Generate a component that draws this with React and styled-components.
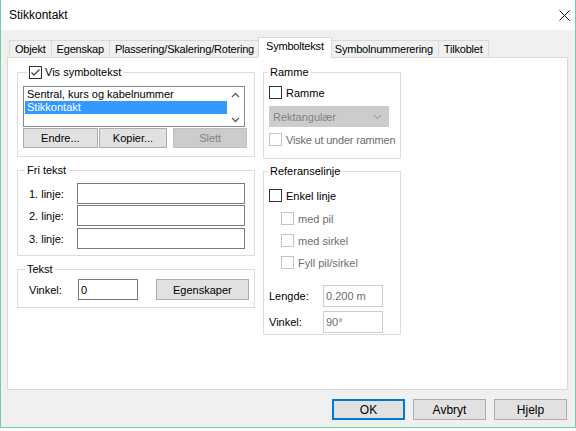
import React from "react";
import styled, { createGlobalStyle } from "styled-components";

const GlobalStyle = createGlobalStyle`
  html, body {
    margin: 0;
    padding: 0;
    background: #ffffff;
  }
  body {
    font-family: "Liberation Sans", Arial, sans-serif;
    font-size: 11px;
    color: #000;
  }
`;

const Window = styled.div`
  width: 576px;
  height: 428px;
  box-sizing: border-box;
  border-left: 1px solid #6fd1a3;
  border-right: 1px solid #6fd1a3;
  border-bottom: 1px solid #6fd1a3;
  background: #f0f0f0;
  box-shadow: 0 2px 3px rgba(0, 0, 0, 0.22);
  display: flex;
  flex-direction: column;
`;

const TitleBar = styled.div`
  height: 30px;
  background: #fff;
  display: flex;
  align-items: center;
  justify-content: space-between;
  padding: 0 9px 0 8px;
  font-size: 12px;
`;

const Body = styled.div`
  flex: 1;
  padding: 7px 7px 0 6px;
  display: flex;
  flex-direction: column;
`;

const TabRow = styled.div`
  display: flex;
  align-items: flex-end;
  height: 21px;
  position: relative;
  z-index: 1;
  margin-bottom: -1px;
  padding-left: 2px;
`;

const Tab = styled.div`
  box-sizing: border-box;
  height: ${p => (p.active ? "21px" : "18px")};
  padding: 0 ${p => (p.active ? "7px" : "5px")};
  margin: 0 ${p => (p.active ? "-2px" : "0")};
  border: 1px solid #d9d9d9;
  border-left-width: ${p => (p.first || p.active ? "1px" : "0")};
  border-bottom-color: ${p => (p.active ? "#fff" : "#d9d9d9")};
  background: ${p => (p.active ? "#fff" : "#f0f0f0")};
  display: flex;
  align-items: center;
  padding-bottom: ${p => (p.active ? "3px" : "1px")};
  position: relative;
  z-index: ${p => (p.active ? 2 : 1)};
  white-space: nowrap;
  letter-spacing: -0.2px;
`;

const Panel = styled.div`
  box-sizing: border-box;
  width: 561px;
  height: 333px;
  background: #fff;
  border: 1px solid #d9d9d9;
  padding: 8px 0 0 9px;
  display: flex;
  gap: 8px;
`;

const Column = styled.div`
  display: flex;
  flex-direction: column;
  width: ${p => p.w}px;
  gap: ${p => p.gap || 7}px;
`;

const Group = styled.fieldset`
  margin: 0;
  padding: 0;
  border: 1px solid #dcdcdc;
  min-width: 0;
  box-sizing: border-box;
`;

const Legend = styled.legend`
  padding: 0 2px;
  margin-left: ${p => p.ml || 7}px;
  line-height: 13px;
  display: flex;
  align-items: center;
  gap: 3px;
`;

const GroupBody = styled.div`
  padding: ${p => p.pad};
  display: flex;
  flex-direction: column;
`;

const ListBox = styled.div`
  box-sizing: border-box;
  width: 222px;
  height: 41px;
  border: 1px solid #828790;
  display: flex;
  padding: 1px 0 1px 1px;
`;

const ListItems = styled.div`
  flex: 1;
  display: flex;
  flex-direction: column;
`;

const ListItem = styled.div`
  height: 13px;
  line-height: 13px;
  padding-left: 2px;
  background: ${p => (p.selected ? "#3399ff" : "transparent")};
  color: ${p => (p.selected ? "#fff" : "#000")};
`;

const ScrollBar = styled.div`
  width: 17px;
  display: flex;
  flex-direction: column;
  justify-content: space-between;
  align-items: center;
  padding: 4px 0 2px;
`;

const ButtonRow = styled.div`
  display: flex;
  margin-top: ${p => p.mt || 0}px;
  align-items: center;
`;

const Button = styled.div`
  box-sizing: border-box;
  width: ${p => p.w}px;
  height: ${p => p.h || 20}px;
  margin-left: ${p => p.ml || 0}px;
  display: flex;
  align-items: center;
  justify-content: center;
  background: ${p => (p.disabled ? "#cccccc" : "#e1e1e1")};
  color: ${p => (p.disabled ? "#838383" : "#000")};
  border: ${p =>
    p.primary ? "2px solid #0078d7" : `1px solid ${p.disabled ? "#bfbfbf" : "#adadad"}`};
  font-size: ${p => p.fs || 11}px;
`;

const FieldRow = styled.div`
  display: flex;
  align-items: center;
  margin-top: ${p => p.mt || 0}px;
`;

const Label = styled.span`
  width: ${p => p.w}px;
  flex-shrink: 0;
  color: ${p => (p.disabled ? "#6d6d6d" : "#000")};
`;

const Input = styled.div`
  box-sizing: border-box;
  width: ${p => p.w}px;
  height: ${p => p.h || 21}px;
  border: 1px solid ${p => (p.disabled ? "#cccccc" : "#7a7a7a")};
  background: #fff;
  color: ${p => (p.disabled ? "#6d6d6d" : "#000")};
  display: flex;
  align-items: center;
  padding-left: 2px;
`;

const Select = styled.div`
  box-sizing: border-box;
  width: 120px;
  height: 21px;
  background: #cccccc;
  border: 1px solid #cccccc;
  color: #838383;
  display: flex;
  align-items: center;
  justify-content: space-between;
  padding: 0 6px 0 3px;
`;

const CheckRow = styled.div`
  display: flex;
  align-items: center;
  gap: 4px;
  margin-top: ${p => p.mt || 0}px;
  margin-left: ${p => p.ml || 0}px;
  color: ${p => (p.disabled ? "#6d6d6d" : "#000")};
  height: 13px;
  white-space: nowrap;
  letter-spacing: ${p => (p.tight ? "-0.2px" : "0")};
`;

const Box = styled.span`
  box-sizing: border-box;
  width: 13px;
  height: 13px;
  border: 1px solid ${p => (p.disabled ? "#c4c4c4" : "#333")};
  background: #fff;
  display: inline-flex;
  align-items: center;
  justify-content: center;
  flex-shrink: 0;
`;

const Footer = styled.div`
  display: flex;
  justify-content: flex-end;
  gap: 8px;
  padding: 9px 1px 0 0;
`;

const Check = ({ checked, disabled }) => (
  <Box disabled={disabled}>
    {checked && (
      <svg width="11" height="11" viewBox="0 0 11 11">
        <path d="M1.5 5.5 L4 8 L9.5 2.5" fill="none" stroke="#333" strokeWidth="1.1" />
      </svg>
    )}
  </Box>
);

const Chevron = ({ up, color = "#606060", w = 9 }) => (
  <svg width={w} height="6" viewBox="0 0 9 6">
    <path
      d={up ? "M1 5 L4.5 1.5 L8 5" : "M1 1 L4.5 4.5 L8 1"}
      fill="none"
      stroke={color}
      strokeWidth="1.3"
    />
  </svg>
);

const tabs = [
  "Objekt",
  "Egenskap",
  "Plassering/Skalering/Rotering",
  "Symboltekst",
  "Symbolnummerering",
  "Tilkoblet"
];

export default function App() {
  return (
    <>
      <GlobalStyle />
      <Window>
        <TitleBar>
          <span>Stikkontakt</span>
          <svg width="11" height="11" viewBox="0 0 11 11" style={{ marginRight: -4 }}>
            <path d="M0.5 0.5 L10.5 10.5 M10.5 0.5 L0.5 10.5" stroke="#111" strokeWidth="1" />
          </svg>
        </TitleBar>
        <Body>
          <TabRow>
            {tabs.map((t, i) => (
              <Tab key={t} first={i === 0} active={t === "Symboltekst"}>
                {t}
              </Tab>
            ))}
          </TabRow>
          <Panel>
            <Column w={238} gap={7}>
              <Group>
                <Legend ml={9}>
                  <Check checked />
                  <span>Vis symboltekst</span>
                </Legend>
                <GroupBody pad="7px 7px 8px 5px">
                  <ListBox>
                    <ListItems>
                      <ListItem>Sentral, kurs og kabelnummer</ListItem>
                      <ListItem selected>Stikkontakt</ListItem>
                    </ListItems>
                    <ScrollBar>
                      <Chevron up />
                      <Chevron />
                    </ScrollBar>
                  </ListBox>
                  <ButtonRow mt={1}>
                    <Button w={75}>Endre...</Button>
                    <Button w={69} ml={1}>Kopier...</Button>
                    <Button w={74} ml={6} disabled>
                      Slett
                    </Button>
                  </ButtonRow>
                </GroupBody>
              </Group>
              <Group>
                <Legend>Fri tekst</Legend>
                <GroupBody pad="6px 9px 6px 11px">
                  <FieldRow>
                    <Label w={48}>1. linje:</Label>
                    <Input w={168} />
                  </FieldRow>
                  <FieldRow mt={1}>
                    <Label w={48}>2. linje:</Label>
                    <Input w={168} />
                  </FieldRow>
                  <FieldRow mt={2}>
                    <Label w={48}>3. linje:</Label>
                    <Input w={168} />
                  </FieldRow>
                </GroupBody>
              </Group>
              <Group>
                <Legend>Tekst</Legend>
                <GroupBody pad="3px 5px 7px 11px">
                  <FieldRow>
                    <Label w={49}>Vinkel:</Label>
                    <Input w={60}>0</Input>
                    <Button w={94} h={21} ml={18}>
                      Egenskaper
                    </Button>
                  </FieldRow>
                </GroupBody>
              </Group>
            </Column>
            <Column w={138} gap={6}>
              <Group>
                <Legend ml={4}>Ramme</Legend>
                <GroupBody pad="7px 5px 12px 5px">
                  <CheckRow>
                    <Check />
                    <span>Ramme</span>
                  </CheckRow>
                  <FieldRow mt={7}>
                    <Select>
                      <span>Rektangulær</span>
                      <Chevron color="#a8a8a8" />
                    </Select>
                  </FieldRow>
                  <CheckRow mt={6} disabled tight>
                    <Check disabled />
                    <span>Viske ut under rammen</span>
                  </CheckRow>
                </GroupBody>
              </Group>
              <Group>
                <Legend ml={4}>Referanselinje</Legend>
                <GroupBody pad="11px 5px 1px 5px">
                  <CheckRow>
                    <Check />
                    <span>Enkel linje</span>
                  </CheckRow>
                  <CheckRow mt={10} ml={12} disabled>
                    <Check disabled />
                    <span>med pil</span>
                  </CheckRow>
                  <CheckRow mt={9} ml={12} disabled>
                    <Check disabled />
                    <span>med sirkel</span>
                  </CheckRow>
                  <CheckRow mt={9} ml={12} disabled>
                    <Check disabled />
                    <span>Fyll pil/sirkel</span>
                  </CheckRow>
                  <FieldRow mt={16}>
                    <Label w={54}>Lengde:</Label>
                    <Input w={60} h={22} disabled>0.200 m</Input>
                  </FieldRow>
                  <FieldRow mt={4}>
                    <Label w={54}>Vinkel:</Label>
                    <Input w={60} h={22} disabled>90°</Input>
                  </FieldRow>
                </GroupBody>
              </Group>
            </Column>
          </Panel>
          <Footer>
            <Button w={73} h={21} primary fs={12}>OK</Button>
            <Button w={73} h={21} fs={12}>Avbryt</Button>
            <Button w={73} h={21} fs={12}>Hjelp</Button>
          </Footer>
        </Body>
      </Window>
    </>
  );
}
